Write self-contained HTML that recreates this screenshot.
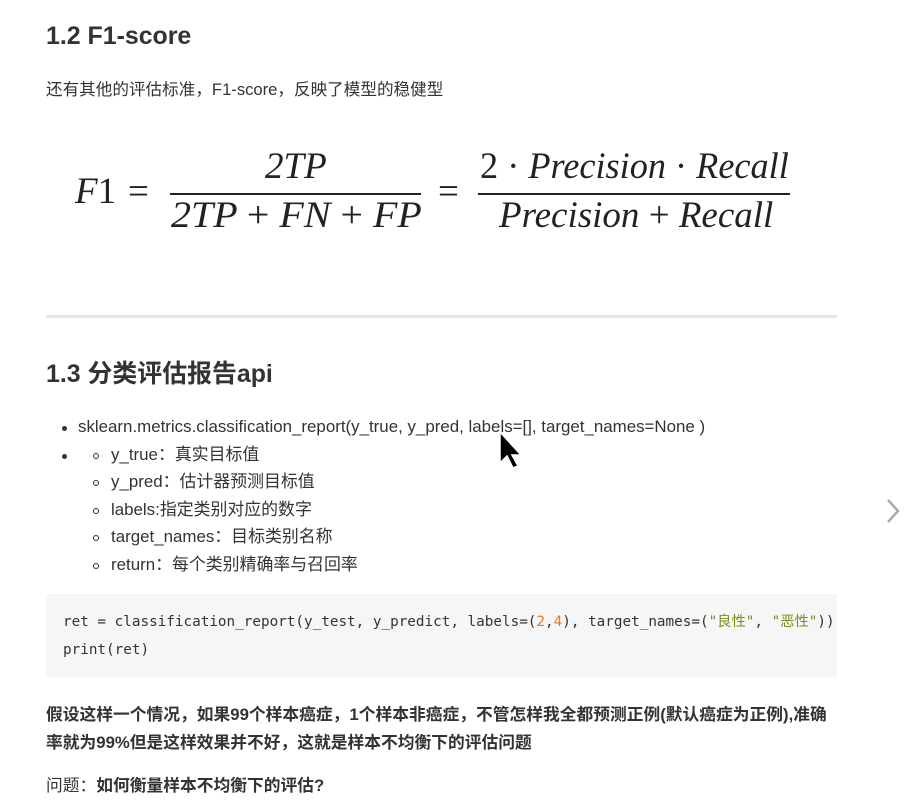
<!DOCTYPE html>
<html><head><meta charset="utf-8"><style>
body{margin:0;width:912px;height:806px;background:#fff;position:relative;overflow:hidden;font-family:"Liberation Sans","Noto Sans CJK SC",sans-serif;color:#333}
.a{position:absolute;white-space:nowrap;line-height:1}
h2{margin:0;font-size:24.9px;font-weight:bold;color:#333}
.t{font-size:16.9px}
.m{font-family:"Liberation Serif",serif;font-style:italic;font-size:37px;color:#222}
.bar{position:absolute;height:2px;background:#222}
.dot{position:absolute;width:5px;height:5px;border-radius:50%;background:#333}
.cir{position:absolute;width:6px;height:6px;border-radius:50%;border:1px solid #333;box-sizing:border-box}
.code{font-family:"DejaVu Sans Mono","Noto Sans CJK SC",monospace;font-size:14.3px;color:#333}
</style></head><body>
<h2 class="a" style="left:46px;top:24px">1.2 F1-score</h2>
<div class="a t" style="left:46px;top:82px;font-size:16.6px">还有其他的评估标准，F1-score，反映了模型的稳健型</div>

<div class="a m" style="left:75px;top:173px">F<span style="font-style:normal">1</span></div>
<div class="a m" style="left:128px;top:173px;font-style:normal">=</div>
<div class="a m" style="left:265px;top:148px">2TP</div>
<div class="bar" style="left:170px;top:193px;width:251px"></div>
<div class="a m" style="left:171px;top:197px;transform:scaleX(1.08);transform-origin:left">2TP <span style="font-style:normal">+</span> FN <span style="font-style:normal">+</span> FP</div>
<div class="a m" style="left:438px;top:173px;font-style:normal">=</div>
<div class="a m" style="left:480px;top:148px;transform:scaleX(0.98);transform-origin:left"><span style="font-style:normal">2 ·</span> Precision <span style="font-style:normal">·</span> Recall</div>
<div class="bar" style="left:478px;top:193px;width:312px"></div>
<div class="a m" style="left:499px;top:197px;transform:scaleX(1.0);transform-origin:left">Precision <span style="font-style:normal">+</span> Recall</div>

<div style="position:absolute;left:46px;top:315px;width:791px;height:3px;background:#e6e6e6"></div>
<h2 class="a" style="left:46px;top:362px">1.3 分类评估报告api</h2>

<div class="dot" style="left:62px;top:426px"></div>
<div class="a t" style="left:78px;top:419px">sklearn.metrics.classification_report(y_true, y_pred, labels=[], target_names=None )</div>
<div class="dot" style="left:62px;top:454px"></div>
<div class="cir" style="left:93px;top:453px"></div>
<div class="a t" style="left:111px;top:447px">y_true：真实目标值</div>
<div class="cir" style="left:93px;top:480px"></div>
<div class="a t" style="left:111px;top:474px">y_pred：估计器预测目标值</div>
<div class="cir" style="left:93px;top:508px"></div>
<div class="a t" style="left:111px;top:502px">labels:指定类别对应的数字</div>
<div class="cir" style="left:93px;top:535px"></div>
<div class="a t" style="left:111px;top:529px">target_names：目标类别名称</div>
<div class="cir" style="left:93px;top:563px"></div>
<div class="a t" style="left:111px;top:557px">return：每个类别精确率与召回率</div>

<div style="position:absolute;left:46px;top:594px;width:791px;height:83px;background:#f6f6f6"></div>
<div class="a code" style="left:63px;top:615px">ret = classification_report(y_test, y_predict, labels=(<span style="color:#e07a2c">2</span>,<span style="color:#e07a2c">4</span>), target_names=(<span style="color:#7a8c1e">"良性"</span>, <span style="color:#7a8c1e">"恶性"</span>))</div>
<div class="a code" style="left:63px;top:643px">print(ret)</div>

<div class="a t" style="left:46px;top:707px;font-weight:bold;font-size:16.75px">假设这样一个情况，如果99个样本癌症，1个样本非癌症，不管怎样我全都预测正例(默认癌症为正例),准确</div>
<div class="a t" style="left:46px;top:735px;font-weight:bold;font-size:16.75px">率就为99%但是这样效果并不好，这就是样本不均衡下的评估问题</div>
<div class="a t" style="left:46px;top:778px;font-size:16.75px">问题：<b>如何衡量样本不均衡下的评估?</b></div>

<svg style="position:absolute;left:498px;top:430px" width="28" height="42" viewBox="0 0 28 42"><path d="M2 2 L2 33 L9 26 L15 38 L20 36 L14 25 L23 25 Z" fill="#000" stroke="#fff" stroke-width="1.5"/></svg>
<svg style="position:absolute;left:884px;top:497px" width="18" height="28" viewBox="0 0 18 28"><path d="M4 3 L14 14 L4 25" fill="none" stroke="#aaa" stroke-width="2.5"/></svg>
</body></html>
